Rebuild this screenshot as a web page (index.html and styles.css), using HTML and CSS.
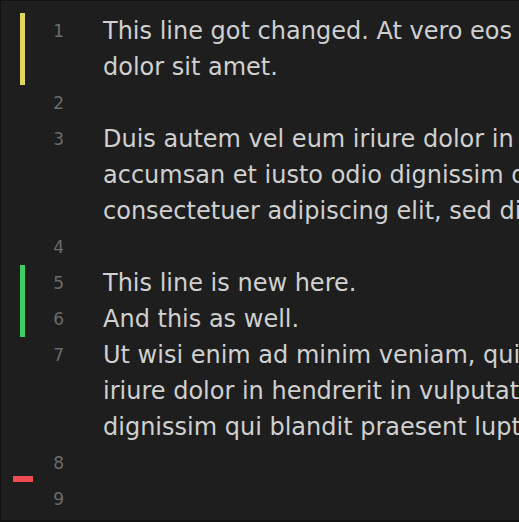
FILE: index.html
```html
<!DOCTYPE html>
<html>
<head>
<meta charset="utf-8">
<link rel="stylesheet" href="styles.css">
</head>
<body>
<div class="editor">
  <div class="line modified">
    <div class="mark"></div>
    <div class="num">1</div>
    <div class="text">
      <span class="row">This line got changed. At vero eos et accusam et justo duo dolores et ea rebum. Stet clita kasd gubergren, no sea takimata sanctus est Lorem ipsum</span>
      <span class="row">dolor sit amet.</span>
    </div>
  </div>
  <div class="line">
    <div class="mark"></div>
    <div class="num">2</div>
    <div class="text"><span class="row">&nbsp;</span></div>
  </div>
  <div class="line">
    <div class="mark"></div>
    <div class="num">3</div>
    <div class="text">
      <span class="row">Duis autem vel eum iriure dolor in hendrerit in vulputate velit esse molestie consequat, vel illum dolore eu feugiat nulla facilisis at vero eros et</span>
      <span class="row">accumsan et iusto odio dignissim qui blandit praesent luptatum zzril delenit augue duis dolore te feugait nulla facilisi. Lorem ipsum dolor sit amet,</span>
      <span class="row">consectetuer adipiscing elit, sed diam nonummy nibh euismod tincidunt ut laoreet dolore magna aliquam erat volutpat.</span>
    </div>
  </div>
  <div class="line">
    <div class="mark"></div>
    <div class="num">4</div>
    <div class="text"><span class="row">&nbsp;</span></div>
  </div>
  <div class="line added">
    <div class="mark"></div>
    <div class="num">5</div>
    <div class="text"><span class="row">This line is new here.</span></div>
  </div>
  <div class="line added">
    <div class="mark"></div>
    <div class="num">6</div>
    <div class="text"><span class="row">And this as well.</span></div>
  </div>
  <div class="line">
    <div class="mark"></div>
    <div class="num">7</div>
    <div class="text">
      <span class="row">Ut wisi enim ad minim veniam, quis nostrud exerci tation ullamcorper suscipit lobortis nisl ut aliquip ex ea commodo consequat. Duis autem vel eum</span>
      <span class="row">iriure dolor in hendrerit in vulputate velit esse molestie consequat, vel illum dolore eu feugiat nulla facilisis at vero eros et accumsan et iusto odio</span>
      <span class="row">dignissim qui blandit praesent luptatum zzril delenit augue duis dolore te feugait nulla facilisi.</span>
    </div>
  </div>
  <div class="line deleted-after">
    <div class="mark"></div>
    <div class="num">8</div>
    <div class="text"><span class="row">&nbsp;</span></div>
    <div class="deletion"></div>
  </div>
  <div class="line">
    <div class="mark"></div>
    <div class="num">9</div>
    <div class="text"><span class="row">&nbsp;</span></div>
  </div>
</div>
</body>
</html>
```

FILE: styles.css
```css
html, body {
  margin: 0;
  padding: 0;
  background: #111111;
  overflow: hidden;
}

.editor {
  margin: 1px 0 2px 1px;
  height: 507px;
  padding-top: 12px;
  background: #1e1e1e;
  overflow: hidden;
  font-family: "DejaVu Sans", sans-serif;
}

.line {
  position: relative;
  display: grid;
  grid-template-columns: 19px 5px 39px 1fr;
  grid-template-areas: "pad mark num text";
}

.mark {
  grid-area: mark;
}

.modified .mark {
  background: #e2d75e;
}

.added .mark {
  background: #3ecf64;
}

.num {
  grid-area: num;
  text-align: right;
  color: #6b6b6b;
  font-size: 17px;
  line-height: 36px;
}

.text {
  grid-area: text;
  margin-left: 39px;
  color: #d0d0d0;
  font-size: 24px;
  line-height: 36px;
  min-width: 0;
}

.row {
  display: block;
  white-space: nowrap;
}

.deletion {
  position: absolute;
  left: 12px;
  bottom: -1px;
  width: 20px;
  height: 6px;
  background: #f04a52;
}
```
